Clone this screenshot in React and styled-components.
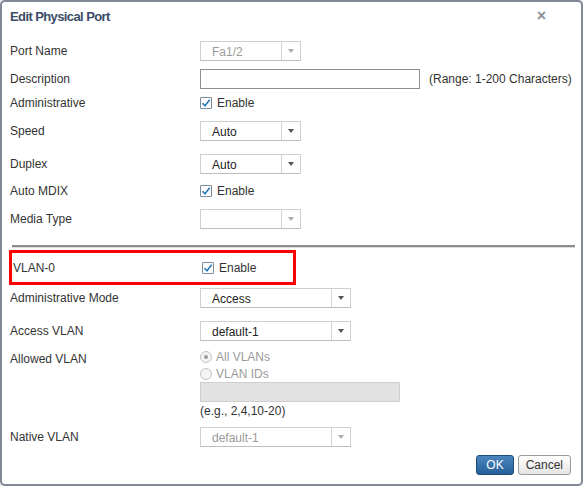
import React from 'react';
import styled, { createGlobalStyle } from 'styled-components';

const GlobalStyle = createGlobalStyle`
  html, body {
    margin: 0;
    padding: 0;
    background: #e9ebee;
  }
  body {
    font-family: "Liberation Sans", Arial, sans-serif;
    font-size: 12px;
    color: #333;
  }
`;

const Dialog = styled.div`
  box-sizing: border-box;
  width: 583px;
  height: 486px;
  background: #fff;
  border: 2px solid #7f8894;
  border-radius: 5px;
  display: flex;
  flex-direction: column;
`;

const TitleBar = styled.div`
  display: flex;
  align-items: center;
  justify-content: space-between;
  height: 28px;
  padding: 0 35px 0 8px;
`;

const Title = styled.h1`
  margin: 0;
  font-size: 13px;
  font-weight: 700;
  letter-spacing: -0.6px;
  color: #3b4b68;
`;

const Close = styled.span`
  font-size: 16px;
  font-weight: 700;
  color: #8a8f96;
  line-height: 1;
`;

const Body = styled.div`
  display: flex;
  flex-direction: column;
  padding: 7px 8px 0 8px;
`;

const Row = styled.div`
  display: flex;
  align-items: ${(p) => (p.$top ? 'flex-start' : 'center')};
  height: ${(p) => p.$h}px;
`;

const Label = styled.div`
  width: 190px;
  flex-shrink: 0;
  color: #333;
  padding-top: ${(p) => p.$pt || 0}px;
`;

const Highlight = styled.div`
  display: flex;
  align-items: center;
  box-sizing: border-box;
  width: 287px;
  height: 35px;
  margin-left: -1px;
  border: 3px solid #ff0000;
  ${Label} {
    width: 189px;
    padding-left: 1px;
  }
`;

const Select = styled.div`
  box-sizing: border-box;
  width: ${(p) => p.$w}px;
  height: 20px;
  display: flex;
  border: 1px solid #cfcfcf;
  border-bottom-color: #bdbdbd;
  background: #fff;
  color: ${(p) => (p.$disabled ? '#9a9a9a' : '#222')};
`;

const SelectText = styled.span`
  flex: 1;
  padding: 3px 0 0 11px;
  font-size: 12px;
`;

const SelectArrow = styled.span`
  width: 18px;
  border-left: 1px solid #d4d4d4;
  display: flex;
  align-items: center;
  justify-content: center;
  &::after {
    content: '';
    border-left: 3.5px solid transparent;
    border-right: 3.5px solid transparent;
    border-top: 4px solid ${(p) => (p.$disabled ? '#aaa' : '#555')};
  }
`;

const TextInput = styled.div`
  box-sizing: border-box;
  width: ${(p) => p.$w}px;
  height: 20px;
  border: 1px solid ${(p) => (p.$disabled ? '#cfcfcf' : '#8e8e8e')};
  background: ${(p) => (p.$disabled ? '#e2e2e2' : '#fff')};
`;

const Hint = styled.span`
  margin-left: 9px;
  color: #333;
`;

const Check = styled.label`
  display: flex;
  align-items: center;
  gap: 5px;
  color: #333;
`;

const Box = styled.span`
  box-sizing: border-box;
  width: 12px;
  height: 12px;
  border: 1px solid #7c8b99;
  border-radius: 1px;
  background: #fff;
  display: flex;
  align-items: center;
  justify-content: center;
`;

const Divider = styled.div`
  margin: 10px 0 2px 2px;
  width: 563px;
  border-top: 2px solid #8c8c8c;
  border-bottom: 1px solid #dcdcdc;
`;

const Options = styled.div`
  display: flex;
  flex-direction: column;
  margin-top: -4px;
`;

const Radio = styled.label`
  display: flex;
  align-items: center;
  gap: 4px;
  height: 17px;
  color: #9a9a9a;
`;

const RadioDot = styled.span`
  box-sizing: border-box;
  width: 12px;
  height: 12px;
  border-radius: 50%;
  border: 1px solid #c4c4c4;
  background: #f4f4f4;
  display: flex;
  align-items: center;
  justify-content: center;
  &::after {
    content: '';
    width: 4px;
    height: 4px;
    border-radius: 50%;
    background: ${(p) => (p.$on ? '#9a9a9a' : 'transparent')};
  }
`;

const Example = styled.div`
  margin-top: 2px;
  color: #333;
`;

const Footer = styled.div`
  display: flex;
  justify-content: flex-end;
  gap: 4px;
  padding: 5px 10px 0 0;
`;

const Button = styled.button`
  box-sizing: border-box;
  height: 20px;
  padding: 0 ${(p) => (p.$primary ? 9 : 7)}px;
  border-radius: 3px;
  font-family: "Liberation Sans", Arial, sans-serif;
  font-size: 12px;
  border: 1px solid ${(p) => (p.$primary ? '#1d4c7c' : '#9c9c9c')};
  color: ${(p) => (p.$primary ? '#fff' : '#333')};
  background: ${(p) =>
    p.$primary
      ? 'linear-gradient(#4a86bd, #26609a)'
      : 'linear-gradient(#ffffff, #e4e4e4)'};
`;

const CheckMark = () => (
  <svg width="10" height="10" viewBox="0 0 10 10">
    <path d="M1.5 5.2 L4 7.8 L8.7 1.8" fill="none" stroke="#2778b4" strokeWidth="1.6" />
  </svg>
);

const Checkbox = ({ label }) => (
  <Check>
    <Box>
      <CheckMark />
    </Box>
    {label}
  </Check>
);

const Dropdown = ({ w, value, disabled }) => (
  <Select $w={w} $disabled={disabled}>
    <SelectText>{value}</SelectText>
    <SelectArrow $disabled={disabled} />
  </Select>
);

const App = () => (
  <>
    <GlobalStyle />
    <Dialog>
      <TitleBar>
        <Title>Edit Physical Port</Title>
        <Close>×</Close>
      </TitleBar>
      <Body>
        <Row $h={28}>
          <Label>Port Name</Label>
          <Dropdown w={101} value="Fa1/2" disabled />
        </Row>
        <Row $h={28}>
          <Label>Description</Label>
          <TextInput $w={220} />
          <Hint>(Range: 1-200 Characters)</Hint>
        </Row>
        <Row $h={20}>
          <Label>Administrative</Label>
          <Checkbox label="Enable" />
        </Row>
        <Row $h={36}>
          <Label>Speed</Label>
          <Dropdown w={101} value="Auto" />
        </Row>
        <Row $h={30}>
          <Label>Duplex</Label>
          <Dropdown w={101} value="Auto" />
        </Row>
        <Row $h={24}>
          <Label>Auto MDIX</Label>
          <Checkbox label="Enable" />
        </Row>
        <Row $h={32}>
          <Label>Media Type</Label>
          <Dropdown w={101} value="" disabled />
        </Row>
        <Divider />
        <Highlight>
          <Label>VLAN-0</Label>
          <Checkbox label="Enable" />
        </Highlight>
        <Row $h={25}>
          <Label>Administrative Mode</Label>
          <Dropdown w={151} value="Access" />
        </Row>
        <Row $h={42}>
          <Label>Access VLAN</Label>
          <Dropdown w={151} value="default-1" />
        </Row>
        <Row $h={72} $top>
          <Label>Allowed VLAN</Label>
          <Options>
            <Radio>
              <RadioDot $on />
              All VLANs
            </Radio>
            <Radio>
              <RadioDot />
              VLAN IDs
            </Radio>
            <TextInput $w={200} $disabled />
            <Example>(e.g., 2,4,10-20)</Example>
          </Options>
        </Row>
        <Row $h={26}>
          <Label>Native VLAN</Label>
          <Dropdown w={151} value="default-1" disabled />
        </Row>
      </Body>
      <Footer>
        <Button $primary>OK</Button>
        <Button>Cancel</Button>
      </Footer>
    </Dialog>
  </>
);

export default App;
